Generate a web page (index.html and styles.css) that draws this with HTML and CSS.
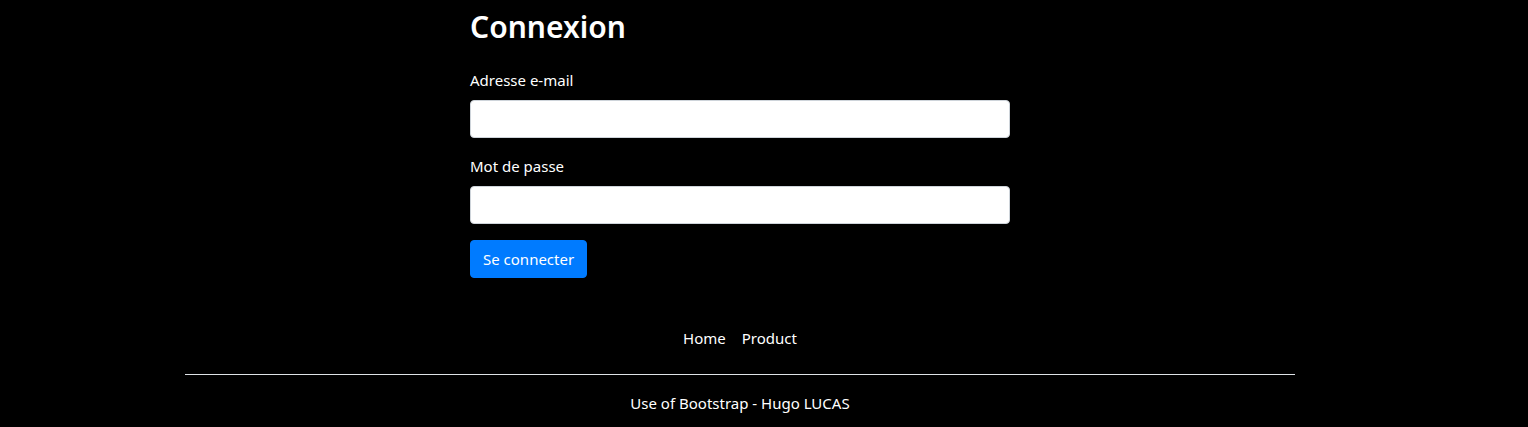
FILE: index.html
```html
<!DOCTYPE html>
<html lang="fr">
<head>
<meta charset="utf-8">
<title>Connexion</title>
<link rel="stylesheet" href="styles.css">
</head>
<body>
<div class="page">
  <main class="login">
    <h2 class="title">Connexion</h2>
    <form class="form">
      <div class="group">
        <label class="label" for="email">Adresse e-mail</label>
        <input class="input" id="email" type="email">
      </div>
      <div class="group">
        <label class="label" for="pwd">Mot de passe</label>
        <input class="input" id="pwd" type="password">
      </div>
      <button class="btn" type="button">Se connecter</button>
    </form>
  </main>
  <footer class="footer">
    <nav class="nav">
      <a class="nav-link" href="#">Home</a>
      <a class="nav-link" href="#">Product</a>
    </nav>
    <div class="rule"></div>
    <p class="credit">Use of Bootstrap - Hugo LUCAS</p>
  </footer>
</div>
</body>
</html>
```
FILE: styles.css
```css
html, body {
  margin: 0;
  padding: 0;
  background: #000;
}
body {
  color: #fff;
  font-family: "Noto Sans", "Open Sans", sans-serif;
  font-size: 15px;
  line-height: 24px;
}
.page {
  width: 1110px;
  margin-left: 185px;
}
.login {
  width: 540px;
  margin-left: 285px;
}
.title {
  margin: 8px 0 22px;
  font-size: 30px;
  line-height: 38px;
  font-weight: 600;
}
.form {
  margin: 0;
}
.group {
  margin-bottom: 16px;
}
.label {
  display: block;
  margin-bottom: 8px;
}
.input {
  display: block;
  box-sizing: border-box;
  width: 100%;
  height: 38px;
  margin: 0;
  background: #fff;
  border: 1px solid #ced4da;
  border-radius: 4px;
}
.btn {
  display: block;
  box-sizing: border-box;
  height: 38px;
  padding: 0 12px;
  background: #007bff;
  border: 1px solid #007bff;
  border-radius: 4px;
  color: #fff;
  font: inherit;
}
.footer {
  margin-top: 48px;
}
.nav {
  display: flex;
  justify-content: center;
  gap: 16px;
}
.nav-link {
  color: #fff;
  text-decoration: none;
}
.rule {
  height: 1px;
  background: #dee2e6;
  margin-top: 24px;
}
.credit {
  margin: 16px 0 0;
  text-align: center;
}
```
